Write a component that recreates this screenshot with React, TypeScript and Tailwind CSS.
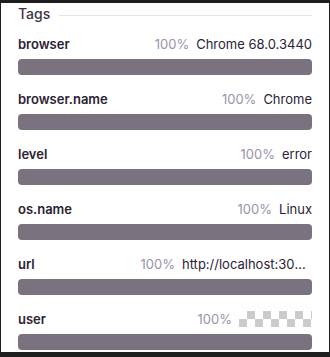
import React from 'react';

const tags = [
    { key: 'browser', value: 'Chrome 68.0.3440' },
    { key: 'browser.name', value: 'Chrome' },
    { key: 'level', value: 'error' },
    { key: 'os.name', value: 'Linux' },
    { key: 'url', value: 'http://localhost:3000/issues/', truncate: true },
    { key: 'user', value: null },
];

export default function App() {
    return (
        <div className="w-[330px] h-[357px] overflow-hidden bg-[#1e1e1e] font-['Inter',sans-serif]">
            <div className="mt-[3px] mx-[1px] h-[349px] bg-white px-[17px] overflow-hidden">
                {/* Heading */}
                <div className="flex items-center gap-[9px] h-[22px]">
                    <h3 className="text-[14px] font-medium text-[#3e3446] leading-none">Tags</h3>
                    <div className="flex-1 h-px bg-[#e7e1ec] mt-[2px]" />
                </div>

                <div className="mt-[11px] flex flex-col">
                    {tags.map((tag) => (
                        <div key={tag.key} className="mb-[16px]">
                            <div className="flex items-center justify-between h-4 text-[13px] leading-4">
                                <span className="font-semibold text-[#2b2233]">{tag.key}</span>
                                <div className="flex items-center gap-[7px] min-w-0">
                                    <span className="text-[#9c92a8] shrink-0">100%</span>
                                    {tag.value === null ? (
                                        <span className="block w-[73px] h-4 bg-[conic-gradient(#cbcbcb_25%,#fff_0_50%,#cbcbcb_0_75%,#fff_0)] bg-[length:16px_16px]" />
                                    ) : (
                                        <span className={tag.truncate ? 'text-[#2b2233] truncate w-[130px]' : 'text-[#2b2233]'}>
                                            {tag.value}
                                        </span>
                                    )}
                                </div>
                            </div>
                            <div className="mt-[7px] h-4 rounded-[4px] bg-[#7a727f]" />
                        </div>
                    ))}
                </div>
            </div>
        </div>
    );
}
